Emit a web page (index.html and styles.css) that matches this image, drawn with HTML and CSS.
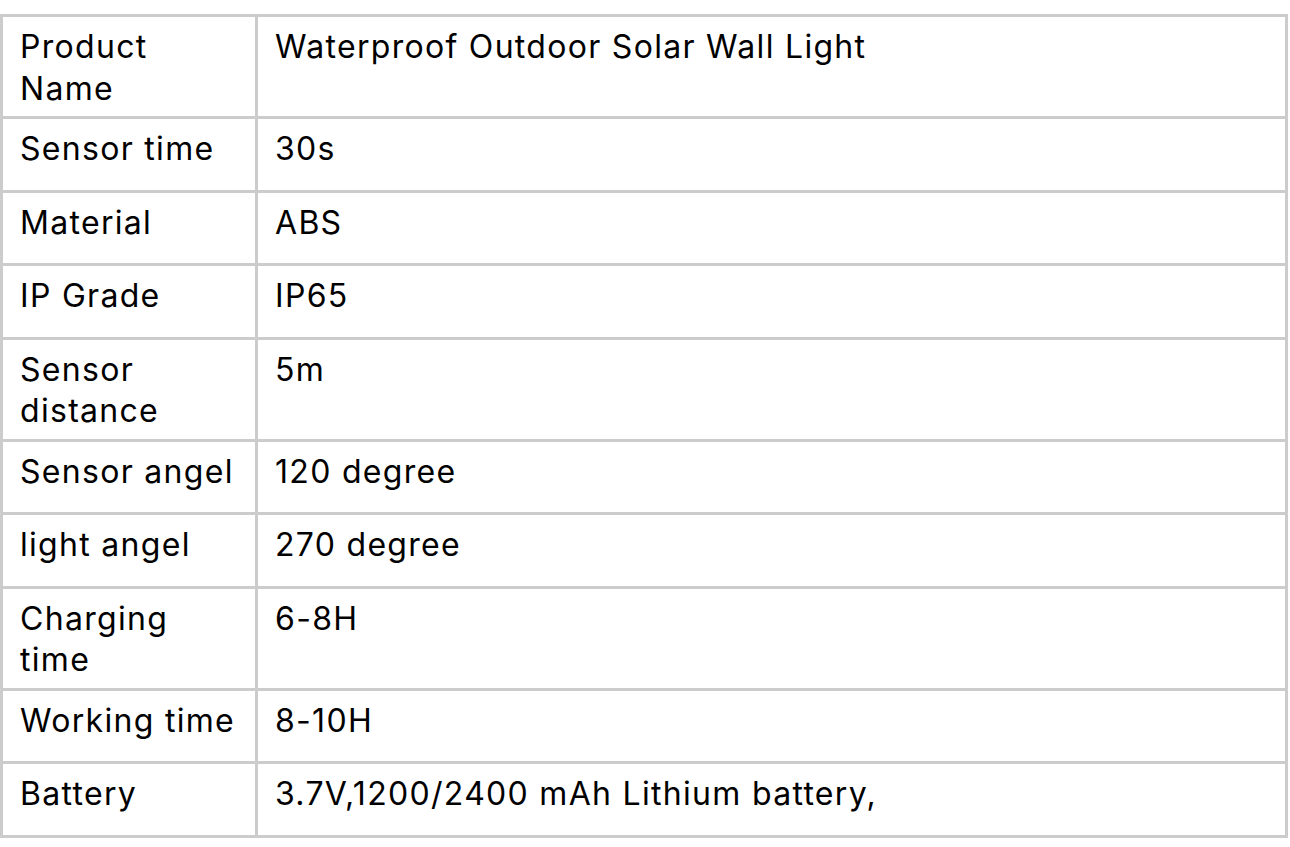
FILE: index.html
```html
<!DOCTYPE html>
<html>
<head>
<meta charset="utf-8">
<link rel="stylesheet" href="styles.css">
</head>
<body>
<table class="spec">
  <tbody>
    <tr><td class="key"><div class="cell">Product Name</div></td><td class="val"><div class="cell">Waterproof Outdoor Solar Wall Light</div></td></tr>
    <tr><td class="key"><div class="cell">Sensor time</div></td><td class="val"><div class="cell">30s</div></td></tr>
    <tr><td class="key"><div class="cell">Material</div></td><td class="val"><div class="cell">ABS</div></td></tr>
    <tr><td class="key"><div class="cell">IP Grade</div></td><td class="val"><div class="cell">IP65</div></td></tr>
    <tr><td class="key"><div class="cell">Sensor distance</div></td><td class="val"><div class="cell">5m</div></td></tr>
    <tr><td class="key"><div class="cell">Sensor angel</div></td><td class="val"><div class="cell">120 degree</div></td></tr>
    <tr><td class="key"><div class="cell">light angel</div></td><td class="val"><div class="cell">270 degree</div></td></tr>
    <tr><td class="key"><div class="cell">Charging time</div></td><td class="val"><div class="cell">6-8H</div></td></tr>
    <tr><td class="key"><div class="cell">Working time</div></td><td class="val"><div class="cell">8-10H</div></td></tr>
    <tr><td class="key"><div class="cell">Battery</div></td><td class="val"><div class="cell">3.7V,1200/2400 mAh Lithium battery,</div></td></tr>
  </tbody>
</table>
</body>
</html>
```

FILE: styles.css
```css
html, body {
  margin: 0;
  padding: 0;
  background: #ffffff;
}

body {
  padding-top: 14px;
  font-family: Inter, "Liberation Sans", sans-serif;
  font-size: 32px;
  letter-spacing: 1.3px;
  line-height: 41.5px;
  color: #000000;
}

.spec {
  border-collapse: collapse;
  width: 1288px;
  table-layout: fixed;
}

.spec td {
  border: 3px solid #cccccc;
  padding: 9px 16px 7px 17px;
  vertical-align: top;
  text-align: left;
}

.spec td.key {
  width: 219px;
}

.spec td.val {
  padding-left: 17px;
}

.cell {
  min-height: 54.5px;
}
```
